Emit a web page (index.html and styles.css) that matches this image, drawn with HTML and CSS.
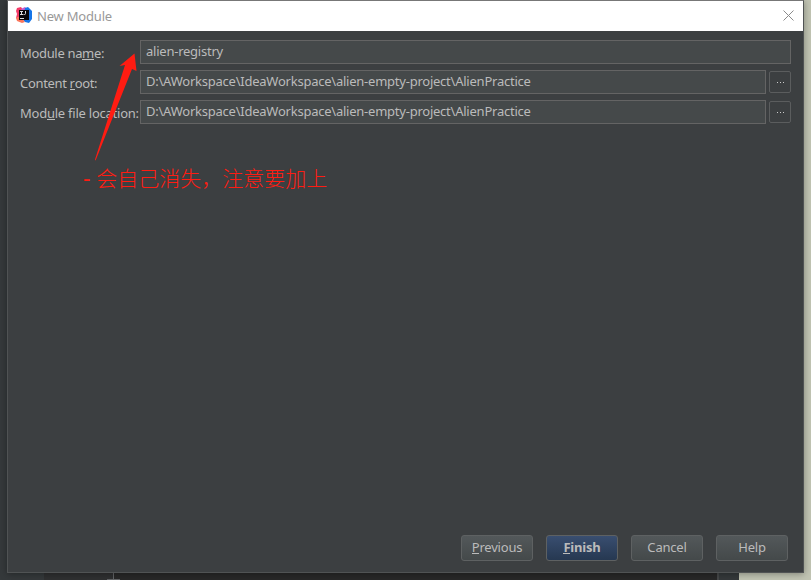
FILE: index.html
```html
<!DOCTYPE html>
<html lang="en">
<head>
<meta charset="utf-8">
<title>New Module</title>
<link rel="stylesheet" href="styles.css">
</head>
<body>
<svg class="backdrop" width="811" height="580" aria-hidden="true">
  <rect width="811" height="580" fill="#35393b"/>
  <rect x="739" width="72" height="580" fill="#c1c4b3"/>
  <rect x="44" y="570" width="674" height="10" fill="#282828"/>
  <rect x="44" y="570" width="69" height="10" fill="#2f3031"/>
  <rect x="717" y="570" width="2" height="10" fill="#464849"/>
  <path d="M113.500 572v7M107 579.500h13" stroke="#626466" fill="none"/>
</svg>
<main class="dialog">
  <header class="titlebar">
    <svg class="logo" width="16" height="16" viewBox="0 0 16 16">
      <path d="M1 1L5 0l3 4-3 6-5 1 1-4-1-3z" fill="#f43b68"/>
      <path d="M5 2l4-2 3 3-5 3z" fill="#c45ad0"/>
      <path d="M9 1l3-1 4 4v8l-3 4-4-1-2-2z" fill="#1675e8"/>
      <path d="M0 11l4-2 5 6-3 1-5-2z" fill="#fb765b"/>
      <path d="M3 3h10v10H3z" fill="#090708"/>
      <path d="M4 4.500h3M5.500 4.500v3M4 7.500h3M9.500 4v2.500q0 1-1 1H7.500M4 11.500h4" fill="none" stroke="#ddd"/>
    </svg>
    <span class="title">New Module</span>
    <svg class="close" width="11" height="11" viewBox="0 0 11 11"><path d="M.5.5l10 10M10.500.5l-10 10" stroke="#8b8b8b" fill="none"/></svg>
  </header>
  <section class="form">
    <div class="row"><label>Module na<u>m</u>e:</label><div class="field">alien-registry</div></div>
    <div class="row"><label>Content <u>r</u>oot:</label><div class="field">D:\AWorkspace\IdeaWorkspace\alien-empty-project\AlienPractice</div><button class="browse"><i></i><i></i><i></i></button></div>
    <div class="row"><label class="location">Mod<u>u</u>le file location:</label><div class="field">D:\AWorkspace\IdeaWorkspace\alien-empty-project\AlienPractice</div><button class="browse"><i></i><i></i><i></i></button></div>
  </section>
  <footer class="actions">
    <button><u>P</u>revious</button>
    <button class="primary"><u>F</u>inish</button>
    <button>Cancel</button>
    <button>Help</button>
  </footer>
</main>
<svg class="arrow" width="811" height="580" aria-hidden="true"><path d="M134.500 53.500L119.500 66l5.500-1L95 159.500q0 2 1 0L132 69l4.500 2z" fill="#ff1c12"/></svg>
<p class="note"><span class="dash">-</span> 会自己消失，注意要加上</p>
</body>
</html>
```
FILE: styles.css
```css
* { box-sizing: border-box; }
body { margin: 0; width: 811px; height: 580px; overflow: hidden; position: relative; font: 13px/18px "Noto Sans", sans-serif; color: #bbb; }
.backdrop, .arrow { position: absolute; inset: 0; }
.arrow { pointer-events: none; }
.dialog { position: absolute; left: 7px; top: 0; width: 797px; height: 573px; border: 1px solid #505354; border-top-color: #777; background: #3c3f41; display: flex; flex-direction: column; box-shadow: 0 1px 7px rgba(0,0,0,.35); }
.titlebar { height: 30px; flex: none; background: #fff; color: #999; display: flex; align-items: center; padding: 0 9px 0 8px; }
.logo { margin-top: -2px; }
.close { margin-top: -2px; }
.title { margin-left: 5px; margin-top: -1px; flex: 1; letter-spacing: -.2px; }
.form { padding: 9px 12px 0; display: flex; flex-direction: column; gap: 6px; }
.row { display: flex; height: 24px; }
label { width: 120px; flex: none; white-space: nowrap; padding-top: 4px; letter-spacing: -.33px; }
.location { letter-spacing: -.24px; }
u { text-decoration: none; display: inline-block; height: 16px; line-height: 18px; box-shadow: inset 0 -1px #bbb; }
.field { flex: 1; background: #45494a; border: 1px solid #646464; padding: 1px 5px; white-space: nowrap; letter-spacing: -.235px; }
button { font: inherit; color: inherit; padding: 0; }
.browse { width: 22px; height: 22px; margin: 1px 0 0 3px; border: 1px solid #5b5d5e; border-radius: 2px; background: #3c3f41; display: flex; align-items: center; justify-content: center; gap: 2px; }
.browse i { width: 1px; height: 1px; background: #ccc; }
.actions { margin-top: auto; padding: 0 15px 11px; display: flex; justify-content: flex-end; gap: 13px; }
.actions button { width: 72px; height: 26px; border: 1px solid #5e6162; border-radius: 3px; background: linear-gradient(#53585a, #44494a); letter-spacing: -.2px; padding-bottom: 2px; }
.actions .primary { background: linear-gradient(#394e70, #263851); font-weight: 700; }
.note { position: absolute; margin: 0; left: 83px; top: 162px; font: 21px/30px "Noto Sans CJK SC", sans-serif; font-weight: 300; color: #ff1c12; white-space: nowrap; }
.dash { font-weight: 500; margin-right: 1px; }
```
